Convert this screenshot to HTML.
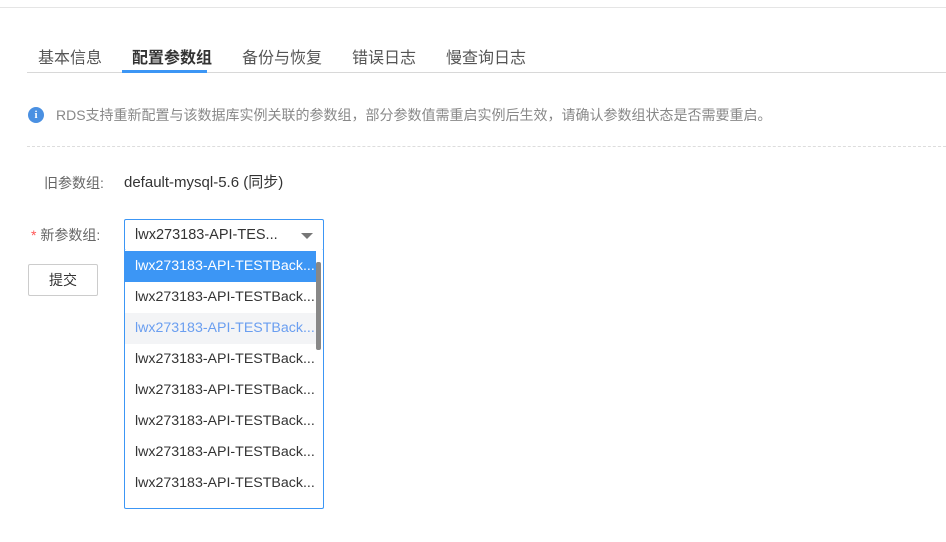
<!DOCTYPE html>
<html><head><meta charset="utf-8"><style>
*{margin:0;padding:0;box-sizing:border-box}
body{width:946px;height:542px;background:#fff;position:relative;overflow:hidden;font-family:"Liberation Sans","Noto Sans CJK SC",sans-serif;color:#333}
.abs{position:absolute}
.tab{position:absolute;top:49px;font-size:16px;color:#555;line-height:20px}
.item{height:31px;line-height:31px;padding-left:10px;font-size:14.2px;color:#333;white-space:nowrap}
</style></head><body>
<div class="abs" style="left:0;top:7px;width:946px;height:1px;background:#e5e5e5"></div>
<div class="tab" style="left:38px">基本信息</div>
<div class="tab" style="left:132px;color:#333;font-weight:bold">配置参数组</div>
<div class="tab" style="left:242px">备份与恢复</div>
<div class="tab" style="left:352px">错误日志</div>
<div class="tab" style="left:446px">慢查询日志</div>
<div class="abs" style="left:27px;top:72px;width:919px;height:1px;background:#d8d8d8"></div>
<div class="abs" style="left:122px;top:70px;width:85px;height:3px;background:#3c96f5"></div>
<div class="abs" style="left:28px;top:107px;width:16px;height:16px;border-radius:50%;background:#4a90e2;color:#fff;font-size:11px;font-weight:bold;text-align:center;line-height:16px;font-family:'Liberation Serif',serif">i</div>
<div class="abs" style="left:56px;top:105px;font-size:14px;color:#888;line-height:20px;white-space:nowrap">RDS支持重新配置与该数据库实例关联的参数组，部分参数值需重启实例后生效，请确认参数组状态是否需要重启。</div>
<div class="abs" style="left:27px;top:146px;width:919px;border-top:1px dashed #ddd"></div>
<div class="abs" style="left:44px;top:173px;font-size:14px;color:#666;line-height:20px">旧参数组:</div>
<div class="abs" style="left:124px;top:173px;font-size:15px;color:#333;line-height:20px">default-mysql-5.6 (同步)</div>
<div class="abs" style="left:31px;top:225px;font-size:14px;color:#666;line-height:20px"><span style="color:#f55">*</span> 新参数组:</div>
<div class="abs" style="left:124px;top:219px;width:200px;height:32px;border:1px solid #3c96f5;border-radius:2px;font-size:14.5px;line-height:30px;padding-left:10px">lwx273183-API-TES...</div>
<div class="abs" style="left:301px;top:233px;width:0;height:0;border-left:6px solid transparent;border-right:6px solid transparent;border-top:6px solid #777"></div>
<div class="abs" style="left:28px;top:264px;width:70px;height:32px;border:1px solid #ccc;border-radius:2px;font-size:14px;text-align:center;line-height:30px">提交</div>
<div class="abs" style="left:124px;top:250px;width:200px;height:259px;border:1px solid #3c96f5;border-top:none;border-radius:0 0 2px 2px;background:#fff;overflow:hidden">
<div style="height:1px"></div>
<div class="item" style="background:#3c96f5;color:#fff;width:191px">lwx273183-API-TESTBack...</div>
<div class="item">lwx273183-API-TESTBack...</div>
<div class="item" style="background:#f3f4f6;color:#6a9ef0;width:191px">lwx273183-API-TESTBack...</div>
<div class="item">lwx273183-API-TESTBack...</div>
<div class="item">lwx273183-API-TESTBack...</div>
<div class="item">lwx273183-API-TESTBack...</div>
<div class="item">lwx273183-API-TESTBack...</div>
<div class="item">lwx273183-API-TESTBack...</div>
<div class="abs" style="left:191px;top:12px;width:5px;height:88px;background:#888;border-radius:2px"></div>
</div>
</body></html>
